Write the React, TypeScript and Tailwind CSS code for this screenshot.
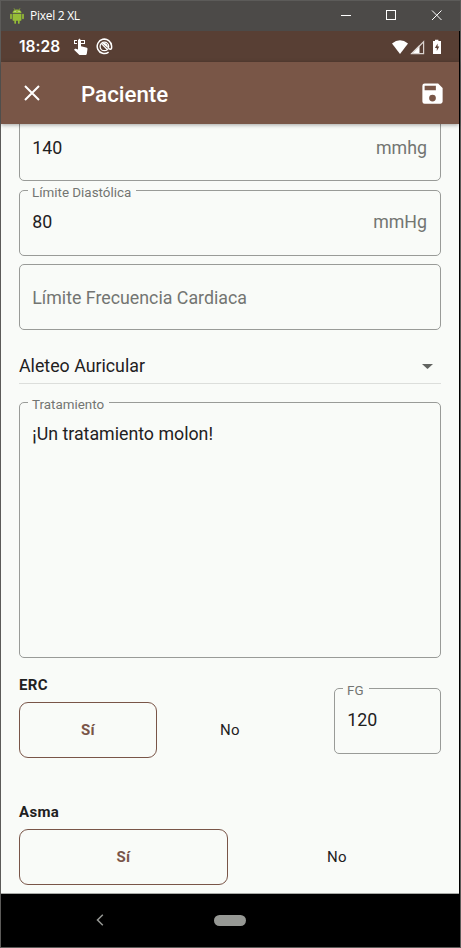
import type { ReactNode } from "react";

function OutlinedField({ label, value, hint, suffix, className = "" }: {
  label?: string;
  value?: string;
  hint?: string;
  suffix?: string;
  className?: string;
}) {
  return (
    <div className={`relative flex shrink-0 justify-between rounded-[5px] border border-[#999b98] pl-[12.3px] pr-[13px] text-[17.8px] leading-6 ${className}`}>
      {label && (
        <span className="absolute left-2 -top-[6px] bg-[#f9fbf8] pl-1 pr-[5px] text-[13.4px] leading-4 text-[#737572]">{label}</span>
      )}
      <span className={value ? "text-[#1f211f]" : "text-[#737572]"}>{value ?? hint}</span>
      {suffix && <span className="text-[#737572]">{suffix}</span>}
    </div>
  );
}

function Choice({ selected, className, children }: { selected?: boolean; className: string; children: ReactNode }) {
  return (
    <div className={`flex h-14 items-center justify-center rounded-[9px] border pt-px text-[15px] tracking-[0.3px] ${selected ? "border-[#795548] font-bold text-[#795548]" : "border-transparent text-[#1f211f]"} ${className}`}>
      {children}
    </div>
  );
}

export default function App() {
  return (
    <div className="flex h-[948px] w-[461px] flex-col border border-[#5c5b59] bg-black font-[Roboto,sans-serif]">
      <header className="flex h-[30px] shrink-0 items-center bg-[#4c4a48] text-white">
        <svg className="ml-[9px] h-4 w-[14px]" viewBox="0 0 14 16" fill="#96bd37" stroke="#96bd37">
          <path d="M2.5 5C2.6 2.7 4.3 1.4 7 1.4S11.4 2.7 11.5 5z" stroke="none" />
          <path d="M4 .3 5 2M10 .3 9 2" strokeWidth=".7" />
          <path d="M2.6 5.7h8.8v6.2c0 .5-.4.9-.9.9h-7c-.5 0-.9-.4-.9-.9z" stroke="none" />
          <path d="M1 6.6v3.7M13 6.6v3.7M5.2 12v3M8.8 12v3" strokeWidth="1.7" strokeLinecap="round" />
          <path d="M5 3.5h.1M9 3.5h.1" stroke="#eee" strokeWidth=".9" strokeLinecap="round" />
        </svg>
        <span className="ml-[6px] font-['Open_Sans',sans-serif] text-[12px] leading-4 tracking-[-0.28px]">Pixel 2 XL</span>
        <svg className="ml-auto h-[30px] w-[120px]" viewBox="0 0 120 30" fill="none" stroke="white" shapeRendering="crispEdges">
          <path d="M1 14.5h10M46.5 9.5h9v9h-9z" />
          <path d="m92 9.5 9.5 9.5m0-9.5L92 19" shapeRendering="auto" />
        </svg>
      </header>

      <div className="mr-px flex h-[31px] shrink-0 items-center bg-[#583f34] text-white">
        <span className="ml-[18px] font-[Inter,sans-serif] text-[15.5px] font-semibold leading-5 tracking-[0.05px]">18:28</span>
        <svg className="ml-[13px] h-[18px] w-[16px]" viewBox="0 0 16 18" fill="white">
          <path d="M1 2h3v1H2v2h2v1H1zM12 2H8v1h3v2H8v1h4z" />
          <path d="M5 2.3 6.4.6 8 2.3v6l5.1 1.1c1 .2 1.5.8 1.4 1.7l-.7 4.7c-.1.8-.7 1.3-1.5 1.3H7.1c-.5 0-.9-.1-1.2-.5L1 11.8l.8-.8c.3-.3.6-.3 1-.2L5 11.5z" />
        </svg>
        <svg className="ml-[7px] h-[17px] w-[17px]" viewBox="0 0 17 17" fill="none" stroke="white" strokeWidth="1.5">
          <path d="M12.6 14.2A7.2 7.2 0 1 1 15.6 8v2.2c-.3 1.3-1.7 1.5-2.7.4" />
          <circle cx="8.4" cy="8.4" r="4.3" strokeWidth="1.3" />
          <path d="M6 5.2C8.7 3.6 12.7 6.6 11.8 10z" fill="white" stroke="none" />
          <path d="m5.2 5.4 6.3 6.3" strokeWidth="1.3" />
        </svg>
        <svg className="ml-auto mr-[16px] h-[18px] w-[51px]" viewBox="0 0 51 18" fill="white">
          <path d="M0 5.5Q8-1 16 5.5L8 16z" />
          <path d="M18.5 16 27.5 7v9z" />
          <path d="M19.8 15.6 31.6 3.8v11.8z" fill="none" stroke="#d9d2ce" strokeWidth="1.2" />
          <path d="M41 3h2V1.8h3.4V3H49v13h-8z" />
          <path d="m45.6 5.6-2.7 4.4h1.9v3l2.5-4.4h-1.7z" fill="#583f34" />
        </svg>
      </div>

      <nav className="z-10 mr-px flex h-[62px] shrink-0 items-center bg-[#795647] text-white shadow-[0_1px_4px_rgba(0,0,0,0.35)]">
        <svg className="ml-[23px] h-4 w-4" viewBox="0 0 16 16" stroke="white" strokeWidth="2" fill="none"><path d="m1 1 14 14M15 1 1 15" /></svg>
        <h1 className="ml-[41px] pt-[2px] text-[22.3px] font-medium leading-7">Paciente</h1>
        <svg className="ml-auto mr-[13px] h-[27px] w-[27px]" viewBox="0 0 24 24" fill="white">
          <path d="M17 3H5a2 2 0 0 0-2 2v14a2 2 0 0 0 2 2h14c1.1 0 2-.9 2-2V7l-4-4zm-5 16a3 3 0 1 1 0-6 3 3 0 0 1 0 6zm3-10H5V5h10v4z" />
        </svg>
      </nav>

      <main className="mr-px flex h-[770px] shrink-0 flex-col overflow-hidden border-b border-[#a9aba8] bg-[#f9fbf8] px-[18px]">
        <OutlinedField value="140" suffix="mmhg" className="-mt-2 h-[65px] pt-[19px]" />
        <OutlinedField label="Límite Diastólica" value="80" suffix="mmHg" className="mt-[9px] h-[66px] pt-[19px]" />
        <OutlinedField hint="Límite Frecuencia Cardiaca" className="mt-2 h-[66px] pt-[21px]" />
        <div className="mt-[18px] flex h-9 shrink-0 items-center justify-between border-b border-[#dcdedb] pr-[8px] text-[17.8px] leading-6 text-[#1f211f]">
          <span>Aleteo Auricular</span>
          <svg className="mt-px h-[5px] w-[11px]" viewBox="0 0 11 5" fill="#626461"><path d="M0 0h11L5.5 5z" /></svg>
        </div>
        <OutlinedField label="Tratamiento" value="¡Un tratamiento molon!" className="mt-[18px] h-[256px] pt-[19px]" />
        <div className="flex shrink-0 justify-between">
          <section className="w-[285px] pt-[17px]">
            <h2 className="h-[27px] text-[15px] tracking-[0.3px] font-bold leading-5 text-[#1f211f]">ERC</h2>
            <div className="flex">
              <Choice selected className="w-[138px]">Sí</Choice>
              <Choice className="w-[146px]">No</Choice>
            </div>
          </section>
          <OutlinedField label="FG" value="120" className="mt-[30px] h-[66px] w-[107px] pt-[19px]" />
        </div>
        <section className="mt-[44px] shrink-0">
          <h2 className="h-[27px] text-[15px] tracking-[0.3px] font-bold leading-5 text-[#1f211f]">Asma</h2>
          <div className="flex">
            <Choice selected className="w-[209px]">Sí</Choice>
            <Choice className="ml-[5px] flex-1">No</Choice>
          </div>
        </section>
      </main>

      <footer className="flex h-[53px] shrink-0 items-center pb-px">
        <svg className="ml-[95px] h-3 w-[8px]" viewBox="0 0 8 12" fill="none" stroke="#969894" strokeWidth="1.5"><path d="M6.8.8 1.5 6l5.3 5.2" /></svg>
        <div className="ml-[110px] h-[11px] w-8 rounded-full bg-[#969894]" />
      </footer>
    </div>
  );
}
